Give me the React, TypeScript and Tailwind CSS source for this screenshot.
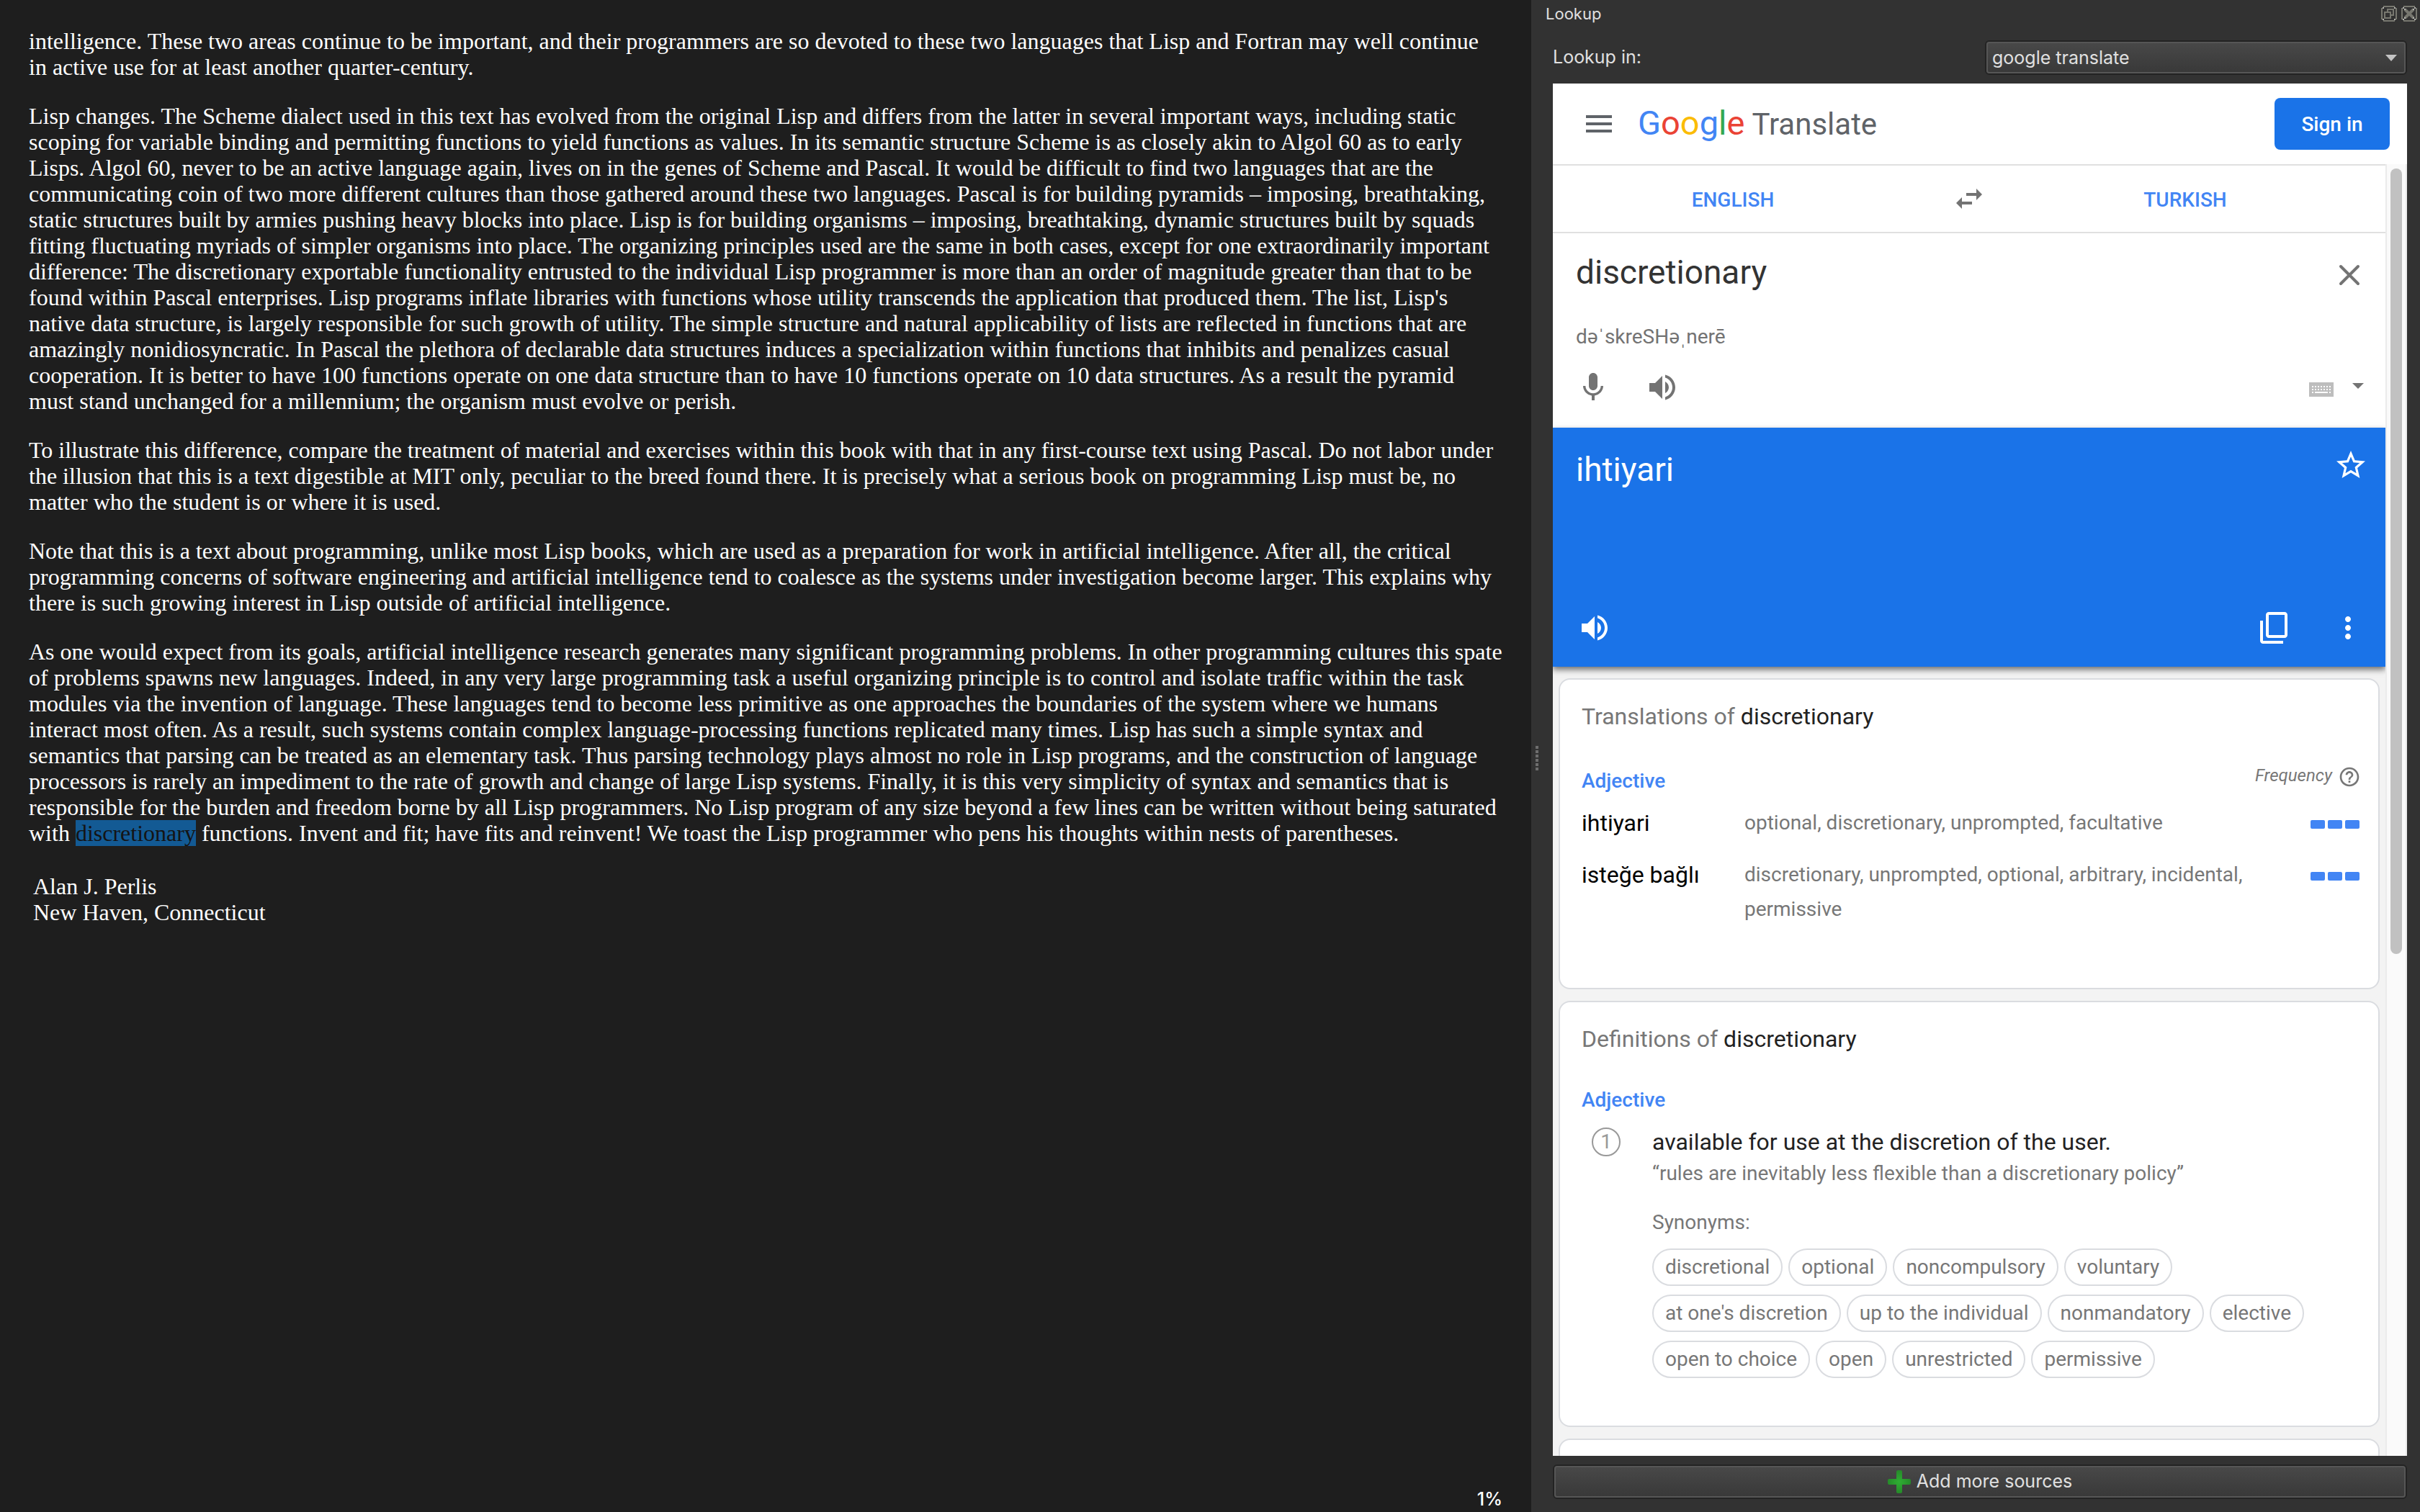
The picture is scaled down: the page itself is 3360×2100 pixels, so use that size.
import React from "react";

type IconProps = { d: string; size?: string };

function Icon({ d, size = "size-12" }: IconProps) {
  return (
    <svg viewBox="0 0 24 24" className={`block ${size}`} fill="currentColor" aria-hidden="true">
      <path d={d} />
    </svg>
  );
}

const ICONS = {
  menu: "M3 18h18v-2H3v2zm0-5h18v-2H3v2zm0-7v2h18V6H3z",
  mic: "M12 14c1.66 0 3-1.34 3-3V5c0-1.66-1.34-3-3-3S9 3.340 9 5v6c0 1.660 1.340 3 3 3zm5.300-3c0 3-2.540 5.100-5.300 5.100S6.700 14 6.700 11H5c0 3.410 2.720 6.230 6 6.720V21h2v-3.280c3.280-.480 6-3.300 6-6.720h-1.700z",
  volume:
    "M3 9v6h4l5 5V4L7 9H3zm13.500 3c0-1.770-1.020-3.290-2.500-4.030v8.050c1.480-.730 2.500-2.250 2.500-4.020zM14 3.230v2.060c2.890.860 5 3.540 5 6.710s-2.110 5.850-5 6.710v2.060c4.010-.910 7-4.490 7-8.770s-2.990-7.860-7-8.770z",
  star: "M22 9.240l-7.190-.620L12 2 9.190 8.630 2 9.240l5.460 4.730L5.820 21 12 17.270 18.180 21l-1.630-7.030L22 9.240zM12 15.400l-3.760 2.270 1-4.280-3.320-2.880 4.380-.380L12 6.100l1.710 4.040 4.380.380-3.320 2.880 1 4.280L12 15.400z",
  copy: "M19 1H8c-1.100 0-2 .900-2 2v14c0 1.100.900 2 2 2h11c1.100 0 2-.900 2-2V3c0-1.100-.900-2-2-2zm0 16H8V3h11v14zM2 7v14c0 1.100.900 2 2 2h14v-2H4V7H2z",
  more: "M12 8c1.100 0 2-.900 2-2s-.900-2-2-2-2 .900-2 2 .900 2 2 2zm0 2c-1.100 0-2 .900-2 2s.900 2 2 2 2-.900 2-2-.900-2-2-2zm0 6c-1.100 0-2 .900-2 2s.900 2 2 2 2-.900 2-2-.900-2-2-2z",
  help: "M11 18h2v-2h-2v2zm1-16C6.480 2 2 6.480 2 12s4.480 10 10 10 10-4.480 10-10S17.520 2 12 2zm0 18c-4.410 0-8-3.590-8-8s3.590-8 8-8 8 3.590 8 8-3.590 8-8 8zm0-14c-2.210 0-4 1.790-4 4h2c0-1.100.900-2 2-2s2 .900 2 2c0 2-3 1.750-3 5h2c0-2.250 3-2.500 3-5 0-2.210-1.790-4-4-4z",
};

const TRANSLATIONS = [
  { word: "ihtiyari", back: "optional, discretionary, unprompted, facultative" },
  { word: "isteğe bağlı", back: "discretionary, unprompted, optional, arbitrary, incidental, permissive" },
];

const SYNONYMS = [
  "discretional",
  "optional",
  "noncompulsory",
  "voluntary",
  "at one's discretion",
  "up to the individual",
  "nonmandatory",
  "elective",
  "open to choice",
  "open",
  "unrestricted",
  "permissive",
];

function Book() {
  return (
    <main className="relative min-w-0 bg-[#1e1e1e] px-10 pt-[39px] font-['Liberation_Serif',serif] text-[32px] leading-9 text-white">
      <div className="flex flex-col gap-8">
        <p>
          intelligence. These two areas continue to be important, and their programmers are so devoted to these two
          languages that Lisp and Fortran may well continue
          <br />
          in active use for at least another quarter-century.
        </p>
        <p>
          Lisp changes. The Scheme dialect used in this text has evolved from the original Lisp and differs from the
          latter in several important ways, including static scoping for variable binding and permitting functions to
          yield functions as values. In its semantic structure Scheme is as closely akin to Algol 60 as to early Lisps.
          Algol 60, never to be an active language again, lives on in the genes of Scheme and Pascal. It would be
          difficult to find two languages that are the communicating coin of two more different cultures than those
          gathered around these two languages. Pascal is for building pyramids – imposing, breathtaking, static
          structures built by armies pushing heavy blocks into place. Lisp is for building organisms – imposing,
          breathtaking, dynamic structures built by squads fitting fluctuating myriads of simpler organisms into place.
          The organizing principles used are the same in both cases, except for one extraordinarily important
          difference: The discretionary exportable functionality entrusted to the individual Lisp programmer is more
          than an order of magnitude greater than that to be found within Pascal enterprises. Lisp programs inflate
          libraries with functions whose utility transcends the application that produced them. The list, Lisp's native
          data structure, is largely responsible for such growth of utility. The simple structure and natural
          applicability of lists are reflected in functions that are amazingly nonidiosyncratic. In Pascal the plethora
          of declarable data structures induces a specialization within functions that inhibits and penalizes casual
          cooperation. It is better to have 100 functions operate on one data structure than to have 10 functions
          operate on 10 data structures. As a result the pyramid must stand unchanged for a millennium; the organism
          must evolve or perish.
        </p>
        <p>
          To illustrate this difference, compare the treatment of material and exercises within this book with that in
          any first-course text using Pascal. Do not labor under the illusion that this is a text digestible at MIT
          only, peculiar to the breed found there. It is precisely what a serious book on programming Lisp must be, no
          matter who the student is or where it is used.
        </p>
        <p>
          Note that this is a text about programming, unlike most Lisp books, which are used as a preparation for work
          in artificial intelligence. After all, the critical programming concerns of software engineering and
          artificial intelligence tend to coalesce as the systems under investigation become larger. This explains why
          there is such growing interest in Lisp outside of artificial intelligence.
        </p>
        <p>
          As one would expect from its goals, artificial intelligence research generates many significant programming
          problems. In other programming cultures this spate of problems spawns new languages. Indeed, in any very large
          programming task a useful organizing principle is to control and isolate traffic within the task modules via
          the invention of language. These languages tend to become less primitive as one approaches the boundaries of
          the system where we humans interact most often. As a result, such systems contain complex language-processing
          functions replicated many times. Lisp has such a simple syntax and semantics that parsing can be treated as an
          elementary task. Thus parsing technology plays almost no role in Lisp programs, and the construction of
          language processors is rarely an impediment to the rate of growth and change of large Lisp systems. Finally,
          it is this very simplicity of syntax and semantics that is responsible for the burden and freedom borne by all
          Lisp programmers. No Lisp program of any size beyond a few lines can be written without being saturated with{" "}
          <mark className="bg-[#135a94] text-[#141414]">discretionary</mark> functions. Invent and fit; have fits and
          reinvent! We toast the Lisp programmer who pens his thoughts within nests of parentheses.
        </p>
        <address className="p-1.5 not-italic">
          Alan J. Perlis
          <br />
          New Haven, Connecticut
        </address>
      </div>
      <span className="absolute right-10 bottom-0.5 font-['Inter',sans-serif] text-[25px] leading-8 font-medium">
        1%
      </span>
    </main>
  );
}

function LookupTitle() {
  return (
    <header className="flex h-[38px] items-center justify-between pr-1 pl-1">
      <h2 className="text-[22px] leading-8">Lookup</h2>
      <div className="flex gap-1.5 text-[#77776f]">
        <button aria-label="Float" className="block">
          <svg viewBox="0 0 22 22" className="block size-[22px]" fill="none" stroke="currentColor" strokeWidth="2">
            <path d="M3 1h16M3 21h16M1 3v16M21 3v16M5 9h8v8H5zM9 9V5h8v8h-4" />
            <path stroke="#b5b5b0" d="M2 3h2M18 3h2M2 19h2M18 19h2" />
          </svg>
        </button>
        <button aria-label="Close" className="block">
          <svg viewBox="0 0 22 22" className="block size-[22px]" fill="none" stroke="currentColor" strokeWidth="2">
            <path d="M3 1h16M3 21h16M1 3v16M21 3v16" />
            <path d="M5 5l12 12M17 5L5 17" strokeWidth="4" />
            <path stroke="#b5b5b0" d="M2 3h2M18 3h2M2 19h2M18 19h2M4 5h2M16 5h2M4 17h2M16 17h2" />
          </svg>
        </button>
      </div>
    </header>
  );
}

function TranslateHeader() {
  return (
    <header className="flex h-28 items-center bg-white pr-6 pl-10">
      <button aria-label="Main menu" className="text-[#5f6368]">
        <Icon d={ICONS.menu} />
      </button>
      <a href="#home" className="ml-7.5 flex items-baseline gap-2.5 leading-14">
        <span className="text-[47px]">
          <span className="text-[#4285f4]">G</span>
          <span className="text-[#ea4335]">o</span>
          <span className="text-[#fbbc05]">o</span>
          <span className="text-[#4285f4]">g</span>
          <span className="text-[#34a853]">l</span>
          <span className="text-[#ea4335]">e</span>
        </span>
        <span className="text-[42px] text-[#5f6368]">Translate</span>
      </a>
      <button className="ml-auto h-18 w-40 rounded-lg bg-[#1a73e8] pt-0.5 text-[28px] font-medium text-white">
        Sign in
      </button>
    </header>
  );
}

function LanguageBar() {
  return (
    <div className="grid h-24 grid-cols-[500fr_156fr_500fr] items-center border-y-2 border-[#e0e0e0] bg-white text-[28px] font-medium text-[#4285f4]">
      <button className="pt-1">ENGLISH</button>
      <button aria-label="Swap languages" className="justify-self-center text-[#737373]">
        <svg viewBox="0 0 36 28" className="block h-7 w-9" fill="currentColor">
          <path d="M0 20l8-8v6h14v4H8v6zM36 8l-8-8v6H14v4h14v6z" />
        </svg>
      </button>
      <button className="pt-1 pr-14">TURKISH</button>
    </div>
  );
}

function SourceText() {
  return (
    <section className="bg-white pt-[26px] pr-[26px] pb-8 pl-8 text-[#737373]">
      <div className="flex items-start">
        <textarea
          aria-label="Source text"
          rows={1}
          defaultValue="discretionary"
          className="block h-14 min-w-0 flex-1 resize-none overflow-hidden text-[46px] leading-14 text-[#333] outline-none"
        />
        <button aria-label="Clear source text" className="mt-2">
          <svg viewBox="0 0 24 24" className="block size-12" stroke="currentColor" strokeWidth="2" strokeLinecap="round">
            <path d="M6 6l12 12M18 6L6 18" />
          </svg>
        </button>
      </div>
      <p className="mt-[42px] text-[28px] leading-10">dəˈskreSHəˌnerē</p>
      <div className="mt-[26px] flex items-center">
        <button aria-label="Translate by voice">
          <Icon d={ICONS.mic} />
        </button>
        <button aria-label="Listen" className="ml-12">
          <Icon d={ICONS.volume} />
        </button>
        <button aria-label="Input tool" className="mt-1.5 ml-auto text-[#bdbdbd]">
          <svg viewBox="0 0 34 20" className="block h-5 w-[34px]">
            <path fill="currentColor" d="M0 0h34v20H0z" />
            <path stroke="#fff" strokeWidth="2" strokeDasharray="2 2" d="M4 6h26M4 10h26" />
            <path stroke="#fff" strokeWidth="2" d="M4 14h2M8 14h18M28 14h2" />
          </svg>
        </button>
        <button aria-label="Choose input tool" className="mr-1 mb-1 ml-6.5">
          <svg viewBox="0 0 16 8" className="block h-2 w-4" fill="currentColor">
            <path d="M0 0h16l-8 8z" />
          </svg>
        </button>
      </div>
    </section>
  );
}

function Result() {
  return (
    <section className="relative z-10 flex h-[332px] flex-col justify-between bg-[#1a73e8] pt-7 pr-6 pb-[30px] pl-8 text-white shadow-[0_4px_8px_rgba(0,0,0,0.55)]">
      <div className="flex items-start justify-between">
        <p className="pt-0.5 text-[46px] leading-14">ihtiyari</p>
        <button aria-label="Star translation">
          <Icon d={ICONS.star} />
        </button>
      </div>
      <div className="flex items-center pr-1 pl-0.5">
        <button aria-label="Listen to translation">
          <Icon d={ICONS.volume} />
        </button>
        <button aria-label="Copy translation" className="ml-auto">
          <Icon d={ICONS.copy} />
        </button>
        <button aria-label="More options" className="ml-[54px]">
          <Icon d={ICONS.more} />
        </button>
      </div>
    </section>
  );
}

const CARD = "rounded-2xl border-2 border-[#dadce0] bg-white pt-[31px] pr-[26px] pl-[30px] text-[28px] text-[#777]";

function CardTitle({ children }: { children: React.ReactNode }) {
  return (
    <h3 className="text-[32px] leading-10">
      {children} <span className="text-[#222]">discretionary</span>
    </h3>
  );
}

function Translations() {
  return (
    <section className={`${CARD} pb-[73px]`}>
      <CardTitle>Translations of</CardTitle>
      <div className="mt-[42px] flex items-start justify-between leading-10">
        <h4 className="pt-2 font-medium text-[#4285f4]">Adjective</h4>
        <div className="flex items-center gap-2 text-[24px] italic">
          Frequency
          <button aria-label="About frequency" className="-mr-0.5 pt-1">
            <Icon d={ICONS.help} size="size-8" />
          </button>
        </div>
      </div>
      <table className="mt-0.5 w-full">
        <tbody className="leading-[48px]">
          {TRANSLATIONS.map((t) => (
            <tr key={t.word} className="align-top">
              <th scope="row" className="w-[226px] py-3 text-left text-[32px] font-normal text-black">
                {t.word}
              </th>
              <td className="py-3 pr-6">{t.back}</td>
              <td className="w-[68px] pt-8">
                <div className="flex gap-1" role="img" aria-label="Common translation">
                  <span className="h-3 w-5 rounded-xs bg-[#4285f4]" />
                  <span className="h-3 w-5 rounded-xs bg-[#4285f4]" />
                  <span className="h-3 w-5 rounded-xs bg-[#4285f4]" />
                </div>
              </td>
            </tr>
          ))}
        </tbody>
      </table>
    </section>
  );
}

function Definitions() {
  return (
    <section className={`${CARD} pb-[66px]`}>
      <CardTitle>Definitions of</CardTitle>
      <h4 className="mt-[45px] leading-10 font-medium text-[#4285f4]">Adjective</h4>
      <div className="mt-[18px] flex gap-11 pl-3.5 leading-10">
        <span className="flex size-10 shrink-0 items-center justify-center rounded-full border-2 border-[#999] text-[28px] text-[#999]">
          1
        </span>
        <div>
          <p className="text-[32px] text-[#222]">available for use at the discretion of the user.</p>
          <p className="mt-1">“rules are inevitably less flexible than a discretionary policy”</p>
          <p className="mt-7">Synonyms:</p>
          <ul className="mt-4 flex flex-wrap gap-x-2 gap-y-3">
            {SYNONYMS.map((s) => (
              <li key={s}>
                <a href={`#${s}`} className="block rounded-full border-2 border-[#dadce0] px-4 py-1">
                  {s}
                </a>
              </li>
            ))}
          </ul>
        </div>
      </div>
    </section>
  );
}

function LookupPanel() {
  return (
    <aside className="flex min-h-0 min-w-0 bg-[#323232] font-['Inter',sans-serif] text-[#e0e0e0]">
      <div className="flex w-4 shrink-0 flex-col items-center justify-center gap-0.5 pt-1.5">
        {[0, 1, 2, 3, 4, 5].map((n) => (
          <span key={n} className="size-1 bg-[#6e6e6e]" />
        ))}
      </div>
      <div className="flex min-h-0 min-w-0 flex-1 flex-col">
        <LookupTitle />
        <div className="flex min-h-0 flex-1 flex-col gap-3 pt-[18px] pr-[18px] pb-[18px] pl-3.5 text-[25px]">
          <div className="grid h-12 shrink-0 grid-cols-2 items-center gap-3.5">
            <label htmlFor="source">Lookup in:</label>
            <div className="relative h-12 rounded-md border-2 border-[#232323]">
              <select
                id="source"
                className="block h-full w-full appearance-none rounded-sm border-2 border-[#565656] bg-linear-to-b from-[#484848] to-[#393939] px-1.5 leading-9"
              >
                <option>google translate</option>
              </select>
              <svg
                viewBox="0 0 16 9"
                className="pointer-events-none absolute top-4.5 right-3 h-[9px] w-4"
                fill="#c4c4c4"
                aria-hidden="true"
              >
                <path d="M0 0h16l-8 9z" />
              </svg>
            </div>
          </div>
          <div className="flex min-h-0 flex-1 flex-col overflow-hidden bg-white font-['Roboto',sans-serif]">
            <TranslateHeader />
            <div className="flex min-h-0 flex-1">
              <div className="min-w-0 flex-1 overflow-hidden bg-[#f3f3f3]">
                <LanguageBar />
                <SourceText />
                <Result />
                <div className="flex flex-col gap-4 px-2 pt-4">
                  <Translations />
                  <Definitions />
                  <section className={`${CARD} h-40`} />
                </div>
              </div>
              <div className="w-[30px] shrink-0 border-x-2 border-[#ebebeb] bg-[#fafafa] px-[5px] pt-1.5">
                <div className="h-[61%] w-4 rounded-full bg-[#c1c1c1]" />
              </div>
            </div>
          </div>
          <button className="h-12 shrink-0 rounded-md border-2 border-[#232323]">
            <span className="flex h-full items-center justify-center gap-2 rounded-sm border-2 border-[#565656] bg-linear-to-b from-[#484848] to-[#393939]">
              <svg viewBox="0 0 32 32" className="block size-8 shrink-0" aria-hidden="true">
                <defs>
                  <radialGradient id="plus">
                    <stop offset="0" stopColor="#2fae33" />
                    <stop offset="1" stopColor="#268a2a" />
                  </radialGradient>
                </defs>
                <path
                  fill="url(#plus)"
                  d="M12 2q0-2 2-2h4q2 0 2 2v10h10q2 0 2 2v4q0 2-2 2H20v10q0 2-2 2h-4q-2 0-2-2V20H2q-2 0-2-2v-4q0-2 2-2h10z"
                />
              </svg>
              Add more sources
            </span>
          </button>
        </div>
      </div>
    </aside>
  );
}

export default function App() {
  return (
    <div className="grid h-screen grid-cols-[2126fr_1234fr] grid-rows-[100%] overflow-hidden">
      <Book />
      <LookupPanel />
    </div>
  );
}
